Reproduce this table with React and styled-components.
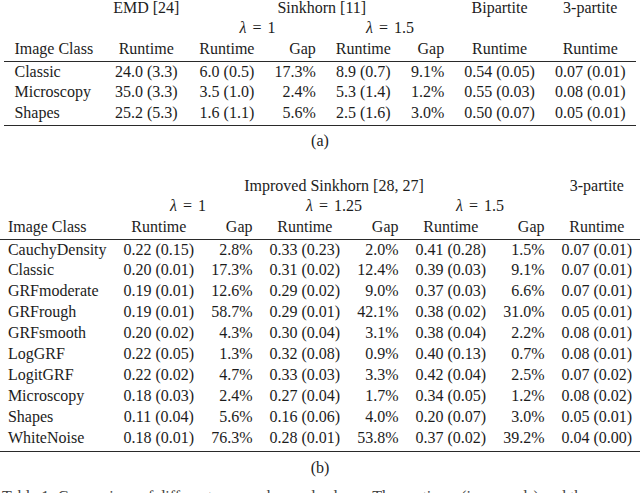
import React from "react";
import styled, { createGlobalStyle } from "styled-components";

const FONT = `"Liberation Serif", "Times New Roman", serif`;
const fontAttrs = () => ({ style: { fontFamily: FONT } });

const GlobalStyle = createGlobalStyle`
  html, body {
    margin: 0;
    padding: 0;
    background: #ffffff;
    overflow: hidden;
  }
  body {
    color: #1c1c1c;
  }
`;

const Page = styled.div.attrs(fontAttrs)`
  width: 640px;
  height: 493px;
  overflow: hidden;
  display: flex;
  flex-direction: column;
  align-items: center;
  color: #1c1c1c;
`;

const DataTable = styled.table.attrs(fontAttrs)`
  border-collapse: collapse;
  border-spacing: 0;
  font-size: 16px;
  color: #1c1c1c;
  white-space: nowrap;
  flex: none;
  margin-top: ${(p) => p.$top || 0}px;
  & td {
    padding-left: ${(p) => p.$pad}px;
    padding-right: ${(p) => p.$pad}px;
  }
`;

const Row = styled.tr`
  & > td {
    line-height: ${(p) => p.$lh}px;
    padding-top: 0;
    padding-bottom: ${(p) => p.$pb || 0}px;
    border-bottom: ${(p) => (p.$rule ? "1px solid #2a2a2a" : "none")};
  }
`;

const Cell = styled.td.attrs(fontAttrs)`
  text-align: ${(p) => p.$align || "center"};
`;

const Lambda = styled.span`
  word-spacing: 2px;
`;

const Greek = styled.span.attrs(fontAttrs)`
  font-style: italic;
`;

const SubCaption = styled.div.attrs(fontAttrs)`
  font-size: 16px;
  line-height: 20px;
  margin-top: ${(p) => p.$top}px;
  text-align: center;
`;

const Caption = styled.p.attrs(fontAttrs)`
  align-self: stretch;
  margin: 9px 0 0;
  padding: 0 2px;
  font-size: 16px;
  line-height: 20px;
  color: #444;
`;

const Lam = ({ v }) => (
  <Lambda>
    <Greek>λ</Greek> = {v}
  </Lambda>
);

const alignsA = ["left", "center", "center", "right", "center", "right", "center", "center"];
const rowsA = [
  ["Classic", "24.0 (3.3)", "6.0 (0.5)", "17.3%", "8.9 (0.7)", "9.1%", "0.54 (0.05)", "0.07 (0.01)"],
  ["Microscopy", "35.0 (3.3)", "3.5 (1.0)", "2.4%", "5.3 (1.4)", "1.2%", "0.55 (0.03)", "0.08 (0.01)"],
  ["Shapes", "25.2 (5.3)", "1.6 (1.1)", "5.6%", "2.5 (1.6)", "3.0%", "0.50 (0.07)", "0.05 (0.01)"],
];
const headA = ["Image Class", "Runtime", "Runtime", "Gap", "Runtime", "Gap", "Runtime", "Runtime"];

const alignsB = ["left", "center", "right", "center", "right", "center", "right", "center"];
const rowsB = [
  ["CauchyDensity", "0.22 (0.15)", "2.8%", "0.33 (0.23)", "2.0%", "0.41 (0.28)", "1.5%", "0.07 (0.01)"],
  ["Classic", "0.20 (0.01)", "17.3%", "0.31 (0.02)", "12.4%", "0.39 (0.03)", "9.1%", "0.07 (0.01)"],
  ["GRFmoderate", "0.19 (0.01)", "12.6%", "0.29 (0.02)", "9.0%", "0.37 (0.03)", "6.6%", "0.07 (0.01)"],
  ["GRFrough", "0.19 (0.01)", "58.7%", "0.29 (0.01)", "42.1%", "0.38 (0.02)", "31.0%", "0.05 (0.01)"],
  ["GRFsmooth", "0.20 (0.02)", "4.3%", "0.30 (0.04)", "3.1%", "0.38 (0.04)", "2.2%", "0.08 (0.01)"],
  ["LogGRF", "0.22 (0.05)", "1.3%", "0.32 (0.08)", "0.9%", "0.40 (0.13)", "0.7%", "0.08 (0.01)"],
  ["LogitGRF", "0.22 (0.02)", "4.7%", "0.33 (0.03)", "3.3%", "0.42 (0.04)", "2.5%", "0.07 (0.02)"],
  ["Microscopy", "0.18 (0.03)", "2.4%", "0.27 (0.04)", "1.7%", "0.34 (0.05)", "1.2%", "0.08 (0.02)"],
  ["Shapes", "0.11 (0.04)", "5.6%", "0.16 (0.06)", "4.0%", "0.20 (0.07)", "3.0%", "0.05 (0.01)"],
  ["WhiteNoise", "0.18 (0.01)", "76.3%", "0.28 (0.01)", "53.8%", "0.37 (0.02)", "39.2%", "0.04 (0.00)"],
];
const headB = ["Image Class", "Runtime", "Gap", "Runtime", "Gap", "Runtime", "Gap", "Runtime"];

const BodyRows = ({ rows, aligns, lastPad }) =>
  rows.map((r, i) => (
    <Row
      key={r[0] + i}
      $lh={i === 0 ? 19 : 21}
      $pb={i === rows.length - 1 ? lastPad : 0}
      $rule={i === rows.length - 1}
    >
      {r.map((c, j) => (
        <Cell key={j} $align={aligns[j]}>
          {c}
        </Cell>
      ))}
    </Row>
  ));

export default function App() {
  return (
    <>
      <GlobalStyle />
      <Page>
        <DataTable $pad={10}>
          <tbody>
            <Row $lh={16}>
              <Cell />
              <Cell>EMD [24]</Cell>
              <Cell colSpan={4}>Sinkhorn [11]</Cell>
              <Cell>Bipartite</Cell>
              <Cell>3-partite</Cell>
            </Row>
            <Row $lh={24}>
              <Cell />
              <Cell />
              <Cell colSpan={2}>
                <Lam v="1" />
              </Cell>
              <Cell colSpan={2}>
                <Lam v="1.5" />
              </Cell>
              <Cell />
              <Cell />
            </Row>
            <Row $lh={18} $pb={3} $rule>
              {headA.map((h, j) => (
                <Cell key={j} $align={alignsA[j]}>
                  {h}
                </Cell>
              ))}
            </Row>
            <BodyRows rows={rowsA} aligns={alignsA} lastPad={2} />
          </tbody>
        </DataTable>
        <SubCaption $top={5}>(a)</SubCaption>

        <DataTable $pad={8.5} $top={25}>
          <tbody>
            <Row $lh={20}>
              <Cell />
              <Cell colSpan={6}>Improved Sinkhorn [28, 27]</Cell>
              <Cell>3-partite</Cell>
            </Row>
            <Row $lh={20}>
              <Cell />
              <Cell colSpan={2}>
                <Lam v="1" />
              </Cell>
              <Cell colSpan={2}>
                <Lam v="1.25" />
              </Cell>
              <Cell colSpan={2}>
                <Lam v="1.5" />
              </Cell>
              <Cell />
            </Row>
            <Row $lh={21} $pb={2} $rule>
              {headB.map((h, j) => (
                <Cell key={j} $align={alignsB[j]}>
                  {h}
                </Cell>
              ))}
            </Row>
            <BodyRows rows={rowsB} aligns={alignsB} lastPad={3} />
          </tbody>
        </DataTable>
        <SubCaption $top={6}>(b)</SubCaption>
        <Caption>
          Table 1: Comparison of different approaches and solvers. The runtimes (in seconds) and the relative gaps
          are given as mean (standard deviation) over all instances of each image class.
        </Caption>
      </Page>
    </>
  );
}
